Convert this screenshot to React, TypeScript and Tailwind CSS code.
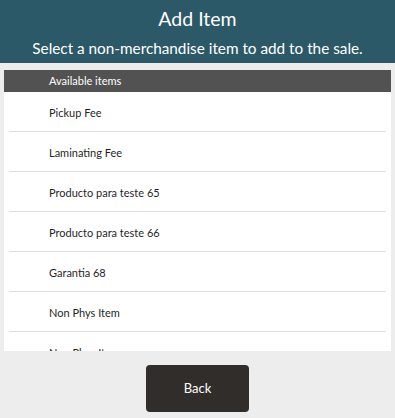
const items = [
  "Pickup Fee",
  "Laminating Fee",
  "Producto para teste 65",
  "Producto para teste 66",
  "Garantia 68",
  "Non Phys Item",
  "Non Phys Item",
];

export default function App() {
  return (
    <div className="w-[395px] h-[418px] bg-[#ededed] flex flex-col font-['Lato',sans-serif] overflow-hidden">
      {/* header */}
      <div className="h-[63px] bg-[#2c5967] text-white flex flex-col items-center pt-[6px]">
        <div className="text-[19.5px] leading-[26px]">Add Item</div>
        <div className="text-[15.3px] leading-[22px] mt-[5px]">
          Select a non-merchandise item to add to the sale.
        </div>
      </div>

      {/* list */}
      <div className="mx-[4px] mt-[7px] h-[281px] bg-white overflow-hidden">
        <div className="h-[22px] bg-[#525252] text-white text-[11px] flex items-center pl-[45px]">
          Available items
        </div>
        {items.map((item, i) => (
          <div
            key={i}
            className="mx-[5px] h-[40px] border-b border-[#dedede] flex items-center pt-[3px] pl-[40px] text-[11px] text-[#1f1f1f]"
          >
            {item}
          </div>
        ))}
      </div>

      {/* footer */}
      <div className="flex-1 flex justify-center pt-[14px]">
        <button className="w-[103px] h-[47px] bg-[#312d2a] rounded-[4px] text-white text-[13px]">
          Back
        </button>
      </div>
    </div>
  );
}
